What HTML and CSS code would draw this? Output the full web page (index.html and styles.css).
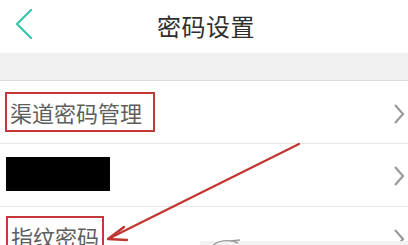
FILE: index.html
```html
<!DOCTYPE html>
<html lang="zh-CN">
<head>
<meta charset="utf-8">
<link rel="stylesheet" href="styles.css">
</head>
<body>
<div class="page">
  <header class="topbar">
    <svg class="back" width="20" height="32" viewBox="0 0 20 32"><polyline points="16,2 2,16 16,30" fill="none" stroke="#3cc7b2" stroke-width="2.4" stroke-linecap="round" stroke-linejoin="round"/></svg>
    <h1 class="title">密码设置</h1>
  </header>
  <div class="band"></div>
  <ul class="list">
    <li class="row row-1">
      <span class="label boxed wide">渠道密码管理</span>
      <svg class="chev" width="12" height="22" viewBox="0 0 12 22"><polyline points="2,2 10,11 2,20" fill="none" stroke="#9a9a9a" stroke-width="2.2"/></svg>
    </li>
    <li class="row row-2">
      <span class="redacted"></span>
      <svg class="chev" width="12" height="22" viewBox="0 0 12 22"><polyline points="2,2 10,11 2,20" fill="none" stroke="#9a9a9a" stroke-width="2.2"/></svg>
    </li>
    <li class="row row-3">
      <span class="label boxed">指纹密码</span>
      <svg class="chev" width="12" height="22" viewBox="0 0 12 22"><polyline points="2,2 10,11 2,20" fill="none" stroke="#9a9a9a" stroke-width="2.2"/></svg>
    </li>
  </ul>
  <svg class="arrow" width="408" height="245" viewBox="0 0 408 245">
    <line x1="299" y1="144" x2="110" y2="238" stroke="#c0352f" stroke-width="2.2" stroke-linecap="round"/>
    <polyline points="124,227 108,239 127,240" fill="none" stroke="#c0352f" stroke-width="2.4" stroke-linecap="round" stroke-linejoin="round"/>
  </svg>
  <div class="watermark">
    <svg width="40" height="8" viewBox="0 0 40 8"><path d="M4 8 C8 1 22 0 30 4 M22 2 L32 1" fill="none" stroke="#9a9a9a" stroke-width="1.4"/></svg>
    <span class="wm-mid"></span>
    <span class="wm-text"></span>
  </div>
</div>
</body>
</html>
```
FILE: styles.css
```css
* { box-sizing: border-box; }
html, body { margin: 0; padding: 0; }
body {
  width: 408px;
  height: 245px;
  overflow: hidden;
  background: #ffffff;
  font-family: "Noto Sans CJK SC", "Noto Sans", sans-serif;
}
.page {
  position: relative;
  width: 408px;
  height: 245px;
  overflow: hidden;
}
.topbar {
  height: 53px;
  display: flex;
  align-items: center;
  justify-content: center;
  position: relative;
  background: #fff;
}
.back {
  position: absolute;
  left: 15px;
  top: 8px;
}
.title {
  margin: 0 0 2px 4px;
  font-size: 24px;
  font-weight: 400;
  color: #2e2e2e;
  letter-spacing: 0.5px;
}
.band {
  height: 28px;
  background: #f0f0f0;
  border-bottom: 1px solid #dedede;
}
.list {
  list-style: none;
  margin: 0;
  padding: 0;
}
.row {
  height: 63px;
  display: flex;
  align-items: flex-start;
  justify-content: space-between;
  padding-left: 5px;
  padding-right: 3px;
  position: relative;
}
.row-1, .row-2 {
  border-bottom: 1px solid #e6e6e6;
}
.row-1::after, .row-2::after { content: none; }
.row-1 { padding-top: 11px; height: 63px; }
.row-2 { padding-top: 13px; height: 63px; padding-left: 6px; }
.row-3 { padding-top: 9px; padding-left: 6px; }
.label {
  font-size: 22px;
  line-height: 30px;
  color: #5e5e5e;
}
.boxed {
  border: 2px solid #c4393a;
  padding: 3px 3px 3px 3px;
}
.wide { padding-right: 11px; }
.redacted {
  display: block;
  width: 104px;
  height: 34px;
  background: #000;
}
.chev {
  margin-top: 11px;
}
.row-2 .chev { margin-top: 8px; }
.row-3 .chev { margin-top: 12px; }
.arrow {
  position: absolute;
  left: 0;
  top: 0;
  pointer-events: none;
}
.watermark {
  position: absolute;
  left: 200px;
  top: 241px;
  width: 208px;
  height: 6px;
  background: #f2f2f2;
  display: flex;
  align-items: flex-end;
  gap: 20px;
  padding-left: 8px;
}
.wm-mid {
  width: 90px;
  height: 2px;
  background: #f7efd9;
}
.wm-text {
  width: 30px;
  height: 2px;
  background: #b5b5b5;
}
```
